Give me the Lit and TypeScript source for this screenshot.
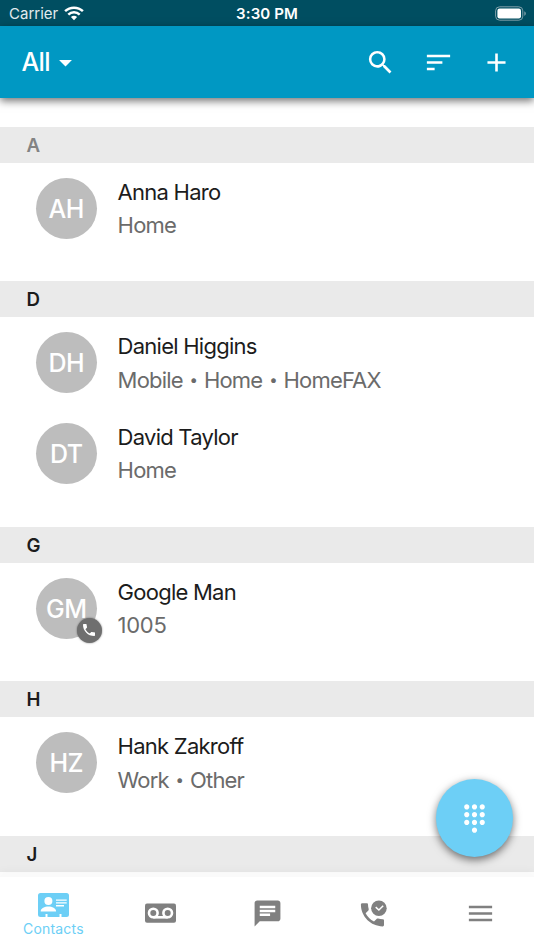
import { LitElement, html, css } from "lit";
import { customElement } from "lit/decorators.js";

interface Contact {
  initials: string;
  name: string;
  details: string[];
  phone?: boolean;
}

interface Section {
  letter: string;
  muted?: boolean;
  contacts: Contact[];
}

const SECTIONS: Section[] = [
  { letter: "A", muted: true, contacts: [{ initials: "AH", name: "Anna Haro", details: ["Home"] }] },
  {
    letter: "D",
    contacts: [
      { initials: "DH", name: "Daniel Higgins", details: ["Mobile", "Home", "HomeFAX"] },
      { initials: "DT", name: "David Taylor", details: ["Home"] },
    ],
  },
  { letter: "G", contacts: [{ initials: "GM", name: "Google Man", details: ["1005"], phone: true }] },
  { letter: "H", contacts: [{ initials: "HZ", name: "Hank Zakroff", details: ["Work", "Other"] }] },
  { letter: "J", contacts: [] },
];

const HANDSET =
  "M6.62 10.79c1.44 2.83 3.76 5.14 6.59 6.59l2.2-2.2c.27-.27.67-.36 1.02-.24 1.12.37 2.33.57 3.57.57.55 0 1 .45 1 1V20c0 .55-.45 1-1 1-9.39 0-17-7.61-17-17 0-.55.45-1 1-1h3.5c.55 0 1 .45 1 1 0 1.25.2 2.45.57 3.57.11.35.03.74-.25 1.02l-2.2 2.2z";

const icon = (d: string) => html`<svg class="icon" viewBox="0 0 24 24"><path d=${d} /></svg>`;

@customElement("app-root")
export class AppRoot extends LitElement {
  static styles = css`
    :host {
      display: flex;
      flex-direction: column;
      position: relative;
      height: 950px;
      overflow: hidden;
      background: #fff;
      color: #1c1c1c;
      font-family: Inter, "Liberation Sans", sans-serif;
    }
    svg {
      display: block;
      fill: currentColor;
    }
    .status {
      flex: none;
      display: grid;
      grid-template-columns: 1fr auto 1fr;
      align-items: center;
      height: 26px;
      padding: 1px 8px 0 9px;
      box-sizing: border-box;
      background: #004e61;
      color: #fff;
      font-size: 15px;
      line-height: 24px;
    }
    .carrier {
      display: flex;
      align-items: center;
      gap: 6px;
      color: #e3ebee;
    }
    .wifi {
      width: 20px;
      height: 15px;
      color: #fff;
    }
    .clock {
      margin-left: -1px;
      font-weight: 600;
      letter-spacing: 0.1px;
    }
    .battery {
      justify-self: end;
      width: 31px;
      height: 15px;
    }
    .toolbar {
      flex: none;
      position: relative;
      z-index: 1;
      display: flex;
      align-items: center;
      height: 72px;
      padding: 0 22px 0 21.5px;
      box-sizing: border-box;
      background: #0098c3;
      color: #fff;
      box-shadow: 0 3px 8px rgba(0, 0, 0, 0.55);
    }
    .filter {
      flex: 1;
      display: flex;
      align-items: center;
      font-size: 25px;
      font-weight: 500;
      letter-spacing: -0.6px;
    }
    .filter .icon {
      margin: 1px 0 0 0;
    }
    .icon {
      width: 31px;
      height: 31px;
    }
    .actions {
      display: flex;
      gap: 27px;
    }
    .list {
      flex: 1;
      min-height: 0;
      overflow: hidden;
      padding-top: 28.6px;
    }
    .section {
      padding-bottom: 28.5px;
    }
    .letter {
      height: 36px;
      padding-left: 26.5px;
      background: #eaeaea;
      font-size: 18.7px;
      font-weight: 600;
      line-height: 38px;
    }
    .letter.muted {
      color: #838383;
    }
    .row {
      display: flex;
      height: 90.33px;
      padding: 15px 36px 0;
      box-sizing: border-box;
    }
    .avatar {
      position: relative;
      flex: none;
      display: flex;
      align-items: center;
      justify-content: center;
      width: 61px;
      height: 61px;
      margin-right: 21px;
      border-radius: 50%;
      background: #bdbdbd;
      color: #fff;
      font-size: 25px;
      font-weight: 500;
      letter-spacing: -0.5px;
    }
    .initials {
      margin: 1px 0 0 -0.5px;
    }
    .badge {
      position: absolute;
      left: 40.5px;
      top: 40px;
      display: flex;
      align-items: center;
      justify-content: center;
      width: 25px;
      height: 25px;
      border-radius: 50%;
      background: #6f6f6f;
      box-shadow: 0 0 2px rgba(0, 0, 0, 0.5);
    }
    .badge .icon {
      width: 16px;
      height: 16px;
    }
    .text {
      margin-left: -0.4px;
    }
    .name,
    .detail {
      font-size: 22px;
      line-height: 28px;
      letter-spacing: -0.75px;
      white-space: nowrap;
    }
    .detail {
      margin-top: 5.5px;
      color: #6b6b6b;
      letter-spacing: -0.83px;
    }
    .detail.number {
      letter-spacing: -0.3px;
    }
    .dot {
      display: inline-block;
      width: 21.3px;
      font-size: 15px;
      text-align: center;
      vertical-align: 2.5px;
      line-height: 1;
    }
    .fab {
      position: absolute;
      z-index: 3;
      left: 435.6px;
      top: 779.4px;
      display: flex;
      align-items: center;
      justify-content: center;
      width: 77.6px;
      height: 77.6px;
      border-radius: 50%;
      background: #6dcff6;
      color: #fff;
      box-shadow: 0 3px 8px rgba(0, 0, 0, 0.55);
    }
    .tabs {
      flex: none;
      position: relative;
      z-index: 2;
      display: grid;
      grid-template-columns: repeat(5, 1fr);
      height: 73px;
      background: #fff;
      color: #808080;
      box-shadow: 0 -4.5px 0 rgba(250, 250, 250, 0.85), 0 -4px 10px rgba(0, 0, 0, 0.06);
    }
    .tab {
      display: flex;
      flex-direction: column;
      align-items: center;
      justify-content: center;
    }
    .tab.active {
      color: #6dcff6;
      font-size: 14px;
      line-height: 18px;
      letter-spacing: 0.2px;
      justify-content: flex-start;
      padding-top: 16px;
    }
    .contacts {
      width: 31px;
      height: 24px;
      margin-bottom: 3px;
    }
    .tab .glyph {
      width: 31px;
      height: 31px;
    }
    .tab .chat {
      margin-left: 1px;
    }
  `;

  private status() {
    return html`<div class="status">
      <div class="carrier">
        <span class="carrier-name">Carrier</span>
        <svg class="wifi" viewBox="0 0 20 15">
          <path d="M10 14.2 6.9 11.1a4.5 4.5 0 0 1 6.2 0z" />
          <g fill="none" stroke="currentColor" stroke-width="2.5">
            <path d="M4.3 8.6a8.2 8.2 0 0 1 11.4 0" />
            <path d="M1.1 5.2a12.9 12.9 0 0 1 17.8 0" />
          </g>
        </svg>
      </div>
      <div class="clock">3:30 PM</div>
      <svg class="battery" viewBox="0 0 31 15">
        <rect x=".6" y=".8" width="27.2" height="13.4" rx="4" fill="none" stroke="#7e9fa9" />
        <rect x="2.4" y="2.6" width="23.6" height="9.8" rx="2.2" />
        <path d="M29.3 5.2c2 .8 2 3.8 0 4.6z" fill="#7e9fa9" />
      </svg>
    </div>`;
  }

  private contact(c: Contact) {
    const numeric = /^\d+$/.test(c.details[0]);
    return html`<div class="row">
      <div class="avatar">
        <span class="initials">${c.initials}</span>
        ${c.phone ? html`<div class="badge">${icon(HANDSET)}</div>` : null}
      </div>
      <div class="text">
        <div class="name">${c.name}</div>
        <div class="detail ${numeric ? "number" : ""}">${c.details.map(
          (d, i) => html`${i ? html`<span class="dot">•</span>` : null}${d}`
        )}</div>
      </div>
    </div>`;
  }

  render() {
    return html`
      ${this.status()}
      <div class="toolbar">
        <div class="filter"><span class="all">All</span>${icon("M7 10l5 5 5-5z")}</div>
        <div class="actions">
          ${icon(
            "M15.5 14h-.79l-.28-.27A6.471 6.471 0 0 0 16 9.5 6.5 6.5 0 1 0 9.5 16c1.61 0 3.09-.59 4.23-1.57l.27.28v.79l5 4.99L20.49 19l-4.99-5zm-6 0C7.01 14 5 11.99 5 9.5S7.01 5 9.5 5 14 7.01 14 9.5 11.99 14 9.5 14z"
          )}
          ${icon("M3 18h6v-2H3v2zM3 6v2h18V6H3zm0 7h12v-2H3v2z")}
          ${icon("M19 13h-6v6h-2v-6H5v-2h6V5h2v6h6v2z")}
        </div>
      </div>
      <div class="list">
        ${SECTIONS.map(
          (s) => html`<div class="section">
            <div class="letter ${s.muted ? "muted" : ""}">${s.letter}</div>
            ${s.contacts.map((c) => this.contact(c))}
          </div>`
        )}
      </div>
      <div class="fab">
        ${icon(
          "M12 19c-1.1 0-2 .9-2 2s.9 2 2 2 2-.9 2-2-.9-2-2-2zM6 1c-1.1 0-2 .9-2 2s.9 2 2 2 2-.9 2-2-.9-2-2-2zm0 6c-1.1 0-2 .9-2 2s.9 2 2 2 2-.9 2-2-.9-2-2-2zm0 6c-1.1 0-2 .9-2 2s.9 2 2 2 2-.9 2-2-.9-2-2-2zm12-8c1.1 0 2-.9 2-2s-.9-2-2-2-2 .9-2 2 .9 2 2 2zm-6 8c-1.1 0-2 .9-2 2s.9 2 2 2 2-.9 2-2-.9-2-2-2zm6 0c-1.1 0-2 .9-2 2s.9 2 2 2 2-.9 2-2-.9-2-2-2zm0-6c-1.1 0-2 .9-2 2s.9 2 2 2 2-.9 2-2-.9-2-2-2zm-6 0c-1.1 0-2 .9-2 2s.9 2 2 2 2-.9 2-2-.9-2-2-2zm0-6c-1.1 0-2 .9-2 2s.9 2 2 2 2-.9 2-2-.9-2-2-2z"
        )}
      </div>
      <div class="tabs">
        <div class="tab active">
          <svg class="contacts" viewBox="0 0 31 24">
            <path
              fill-rule="evenodd"
              d="M2.5 0h26A2.5 2.5 0 0 1 31 2.5v19a2.5 2.5 0 0 1-2.5 2.5H23.5v-3h-2v3H9.5v-3h-2v3H2.5A2.5 2.5 0 0 1 0 21.5v-19A2.5 2.5 0 0 1 2.5 0zM10.4 3.9a4 4 0 1 0 0 8 4 4 0 0 0 0-8zM2.7 18.5h15.4c0-3.4-4-5-7.7-5s-7.7 1.6-7.7 5zM18 6.5v1.3h10.7V6.5zM18 9.3v1.3h10.7V9.3zM18 12.1v1.3h8V12.1z"
            />
          </svg>
          <span class="tab-label">Contacts</span>
        </div>
        <div class="tab">
          <svg class="glyph" viewBox="0 0 31 31">
            <rect x="0" y="5.4" width="31" height="19.4" rx="2" />
            <g fill="none" stroke="#fff" stroke-width="2.6">
              <circle cx="8.3" cy="15" r="4.3" />
              <circle cx="22.7" cy="15" r="4.3" />
              <path d="M8.3 19.3h14.4" />
            </g>
          </svg>
        </div>
        <div class="tab">
          <svg class="glyph chat" viewBox="0 0 24 24">
            <path
              d="M20 2H4c-1.1 0-1.99.9-1.99 2L2 22l4-4h14c1.1 0 2-.9 2-2V4c0-1.1-.9-2-2-2zM6 9h12v2H6V9zm8 5H6v-2h8v2zm4-6H6V6h12v2z"
            />
          </svg>
        </div>
        <div class="tab">
          <svg class="glyph" viewBox="0 0 31 31">
            <path
              d="M4.2 5.3h4.5c.8 0 1.3.5 1.3 1.2 0 1.6.3 3.1.7 4.6.1.5 0 1-.3 1.3l-2.8 2.8c1.9 3.6 4.7 6.5 8.4 8.4l2.8-2.8c.4-.3.9-.4 1.3-.3 1.5.5 3 .7 4.6.7.7 0 1.3.5 1.3 1.3v4.6c0 .7-.6 1.3-1.3 1.3C12.7 28.4 2.9 18.6 2.9 6.6c0-.7.6-1.3 1.3-1.3z"
            />
            <circle cx="20.9" cy="10.2" r="7.8" />
            <path d="m17.7 9.1 3.2 2.9 4.3-4.3" fill="none" stroke="#fff" stroke-width="1.5" />
          </svg>
        </div>
        <div class="tab">
          <svg class="glyph" viewBox="0 0 24 24"><path d="M3 18h18v-2H3v2zm0-5h18v-2H3v2zm0-7v2h18V6H3z" /></svg>
        </div>
      </div>
    `;
  }
}
